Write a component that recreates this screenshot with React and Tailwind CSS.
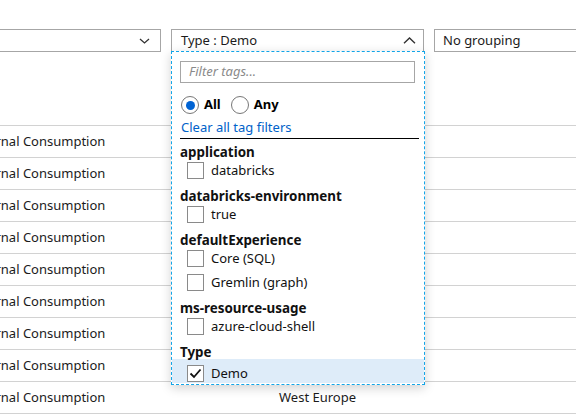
import React from 'react';

const font = { fontFamily: '"Noto Sans", "Open Sans", sans-serif' };

function Chevron({ up }) {
  if (up) {
    return (
      <svg width="13" height="7" viewBox="0 0 13 7" className="text-[#333]">
        <path d="M1 6.2 L6.5 1 L12 6.2" fill="none" stroke="currentColor" strokeWidth="1.4" />
      </svg>
    );
  }
  return (
    <svg width="11" height="6" viewBox="0 0 11 6" className="text-[#333]">
      <path d="M1 1 L5.5 5 L10 1" fill="none" stroke="currentColor" strokeWidth="1.3" />
    </svg>
  );
}

function Box({ checked }) {
  return (
    <div className="w-[17px] h-[17px] border border-[#8a8a8a] bg-white flex items-center justify-center shrink-0">
      {checked && (
        <svg width="13" height="11" viewBox="0 0 13 11">
          <path d="M1.5 5.5 L5 9 L11.5 1.5" fill="none" stroke="#111" strokeWidth="1.8" />
        </svg>
      )}
    </div>
  );
}

function Radio({ on, label }) {
  return (
    <div className="flex items-center gap-[5px]">
      <div className="w-[18px] h-[18px] rounded-full border border-[#777] bg-white flex items-center justify-center">
        {on && <div className="w-[9px] h-[9px] rounded-full bg-[#0063d3]" />}
      </div>
      <span className="font-bold text-[13px] text-black">{label}</span>
    </div>
  );
}

function Header({ children, short }) {
  return (
    <div className={`${short ? 'h-[17px]' : 'h-[20px]'} leading-[20px] font-bold text-[13.4px] text-[#111] whitespace-nowrap`}>
      {children}
    </div>
  );
}

function Row({ label, checked }) {
  if (checked) {
    return (
      <div className="h-[24px] -mx-[8px] pl-[15px] pt-[6px] bg-[#deecf9] flex items-start gap-[7px]">
        <Box checked />
        <span className="text-[13px] leading-[17px] text-[#111]">{label}</span>
      </div>
    );
  }
  return (
    <div className="h-[24px] pl-[7px] flex items-start gap-[7px]">
      <Box />
      <span className="text-[13px] leading-[17px] text-[#111]">{label}</span>
    </div>
  );
}

const groups = [
  { name: 'application', items: ['databricks'] },
  { name: 'databricks-environment', items: ['true'] },
  { name: 'defaultExperience', items: ['Core (SQL)', 'Gremlin (graph)'] },
  { name: 'ms-resource-usage', items: ['azure-cloud-shell'] },
];

export default function App() {
  return (
    <div className="relative w-[576px] h-[415px] overflow-hidden bg-white text-[#1b1b1b]" style={font}>
      {/* filter bar */}
      <div className="pt-[29px] flex gap-[10px] ml-[-200px]">
        <div className="shrink-0 w-[361px] h-[23px] border border-[#a6a6a6] flex items-center justify-end pr-[10px]">
          <Chevron />
        </div>
        <div className="shrink-0 w-[253px] h-[23px] border border-[#a6a6a6] flex items-center justify-between pl-[9px] pr-[7px]">
          <span className="text-[13px]">Type : Demo</span>
          <Chevron up />
        </div>
        <div className="shrink-0 w-[300px] h-[23px] border border-[#a6a6a6] flex items-center pl-[8px]">
          <span className="text-[13px]">No grouping</span>
        </div>
      </div>

      {/* table */}
      <div className="mt-[73px] border-t border-[#d2d2d2]">
        {Array.from({ length: 9 }).map((_, i) => (
          <div key={i} className="h-[32px] border-b border-[#d2d2d2] flex items-center pt-[1px] text-[13px] text-[#1b1b1b]">
            <span className="shrink-0 ml-[-29px] w-[308px] whitespace-nowrap">Internal Consumption</span>
            <span className="shrink-0 whitespace-nowrap">West Europe</span>
          </div>
        ))}
      </div>

      {/* tag filter popup */}
      <div className="absolute left-[171px] top-[51px] w-[254px] h-[334px] bg-white border border-dashed border-[#12a5e8] shadow-[0_3px_10px_rgba(0,0,0,0.18)] px-[8px] pt-[9px]">
        <div className="w-[235px] h-[22px] border border-[#a6a6a6] flex items-center pl-[8px]">
          <span className="italic text-[13px] text-[#8a8a8a]">Filter tags...</span>
        </div>
        <div className="mt-[13px] h-[18px] flex items-center gap-[10px] pl-[1px]">
          <Radio on label="All" />
          <Radio label="Any" />
        </div>
        <div className="mt-[4px] h-[18px] leading-[18px] pl-[1px] text-[13px] text-[#0062c9]">Clear all tag filters</div>
        <div className="mt-[2px] w-[239px] h-px bg-black" />
        <div className="mt-[3px]">
          {groups.map((g) => (
            <div key={g.name}>
              <Header>{g.name}</Header>
              {g.items.map((it) => (
                <Row key={it} label={it} />
              ))}
            </div>
          ))}
          <Header short>Type</Header>
          <Row label="Demo" checked />
        </div>
      </div>
    </div>
  );
}
